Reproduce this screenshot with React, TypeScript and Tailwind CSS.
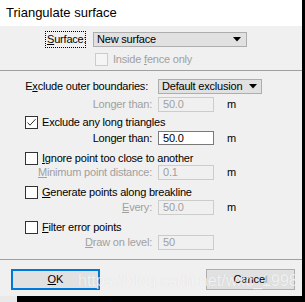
import React from "react";

const font = "font-['Liberation_Sans',Arial,sans-serif]";

function Arrow() {
  return (
    <svg width="8" height="5" viewBox="0 0 8 5" className="shrink-0">
      <path d="M0 0H8L4 4.5Z" fill="#000" />
    </svg>
  );
}

function CheckBox({ checked = false, disabled = false }: { checked?: boolean; disabled?: boolean }) {
  return (
    <div
      className={
        "w-[13px] h-[13px] shrink-0 border flex items-center justify-center " +
        (disabled ? "border-[#cccccc] bg-[#f5f5f5]" : "border-[#333333] bg-white")
      }
    >
      {checked && (
        <svg width="11" height="11" viewBox="0 0 11 11">
          <path d="M1.5 5.5L4 8.2L9.5 2.2" fill="none" stroke="#333" strokeWidth="1" />
        </svg>
      )}
    </div>
  );
}

function CheckRow({ children, checked, top }: { children: React.ReactNode; checked?: boolean; top: string }) {
  return (
    <div className={"flex items-center h-[13px] pl-[25px] gap-[4px] " + top}>
      <CheckBox checked={checked} />
      <span className="text-black leading-none">{children}</span>
    </div>
  );
}

function FieldRow({
  label,
  value,
  disabled = true,
  unit = true,
  top,
  h = "h-[15px]",
}: {
  label: React.ReactNode;
  value: string;
  disabled?: boolean;
  unit?: boolean;
  top: string;
  h?: string;
}) {
  return (
    <div className={"flex items-center " + top}>
      <div className={"w-[152px] text-right leading-none " + (disabled ? "text-[#a0a0a0]" : "text-black")}>{label}</div>
      <div
        className={
          "ml-[6px] w-[56px] border flex items-center pl-[4px] leading-none " +
          h +
          (disabled ? " border-[#cccccc] bg-[#f0f0f0] text-[#a0a0a0]" : " border-[#7a7a7a] bg-white text-black")
        }
      >
        {value}
      </div>
      {unit && <span className="ml-[13px] text-black leading-none">m</span>}
    </div>
  );
}

export default function App() {
  return (
    <div className={"w-[305px] h-[302px] bg-black overflow-hidden relative text-[11px] tracking-[-0.2px] " + font}>
      <div className="w-[302px] h-[296px] bg-[#f0f0f0] flex flex-col">
        {/* title bar */}
        <div className="h-[26px] bg-white flex items-center pl-[6px] text-[13px] tracking-normal text-black">
          Triangulate surface
        </div>

        {/* surface */}
        <div className="mt-[5px] h-[17px] flex items-center">
          <div className="ml-[45px] w-[41px] h-[17px] border border-dotted border-black flex items-center pl-[1px] leading-none">
            <span className="underline">S</span>urface:
          </div>
          <div className="ml-[7px] w-[154px] h-[15px] bg-[#e1e1e1] border border-[#adadad] flex items-center justify-between pl-[3px] pr-[5px] leading-none">
            <span>New surface</span>
            <Arrow />
          </div>
        </div>
        <div className="mt-[5px] h-[13px] flex items-center pl-[95px] gap-[5px]">
          <CheckBox disabled />
          <span className="text-[#a0a0a0] leading-none">
            Inside <span className="underline">f</span>ence only
          </span>
        </div>

        <div className="mt-[4px] border-t border-[#a0a0a0]" />

        {/* exclusions */}
        <div className="mt-[8px] h-[15px] flex items-center">
          <div className="w-[148px] text-right leading-none">
            E<span className="underline">x</span>clude outer boundaries:
          </div>
          <div className="ml-[10px] w-[104px] h-[15px] bg-[#e1e1e1] border border-[#adadad] flex items-center justify-between pl-[3px] pr-[4px] leading-none">
            <span>Default exclusion</span>
            <Arrow />
          </div>
        </div>
        <FieldRow top="mt-[3px]" label="Longer than:" value="50.0" />
        <CheckRow top="mt-[4px]" checked>
          Exclude any long triangles
        </CheckRow>
        <FieldRow top="mt-[2px]" label="Longer than:" value="50.0" disabled={false} h="h-[14px]" />
        <CheckRow top="mt-[7px]">
          <span className="underline">I</span>gnore point too close to another
        </CheckRow>
        <FieldRow
          top="mt-0"
          label={
            <>
              <span className="underline">M</span>inimum point distance:
            </>
          }
          value="0.1"
        />
        <CheckRow top="mt-[6px]">
          <span className="underline">G</span>enerate points along breakline
        </CheckRow>
        <FieldRow
          top="mt-[1px]"
          label={
            <>
              <span className="underline">E</span>very:
            </>
          }
          value="50.0"
        />
        <CheckRow top="mt-[6px]">
          <span className="underline">F</span>ilter error points
        </CheckRow>
        <FieldRow
          top="mt-[1px]"
          label={
            <>
              <span className="underline">D</span>raw on level:
            </>
          }
          value="50"
          unit={false}
        />

        <div className="mt-[9px] border-t border-[#a0a0a0]" />

        {/* buttons */}
        <div className="mt-[9px] flex items-center justify-between pl-[11px] pr-[7px]">
          <button className="w-[89px] h-[21px] bg-[#e1e1e1] border-2 border-[#0078d7] flex items-center justify-center leading-none tracking-normal">
            <span className="underline">O</span>K
          </button>
          <button className="w-[89px] h-[21px] bg-[#e1e1e1] border border-[#adadad] flex items-center justify-center leading-none tracking-normal">
            Cancel
          </button>
        </div>
      </div>
      <div className="flex h-[6px]">
        <div className="w-[17px] bg-[#e9e9e9]" />
      </div>

      {/* watermark */}
      <div className="absolute left-[78px] top-[269px] text-[16px] tracking-normal text-white/75 pointer-events-none [text-shadow:0_0_1px_rgba(0,0,0,0.12)]">
        https://blog.csdn.net/wxc_1998
      </div>
    </div>
  );
}
